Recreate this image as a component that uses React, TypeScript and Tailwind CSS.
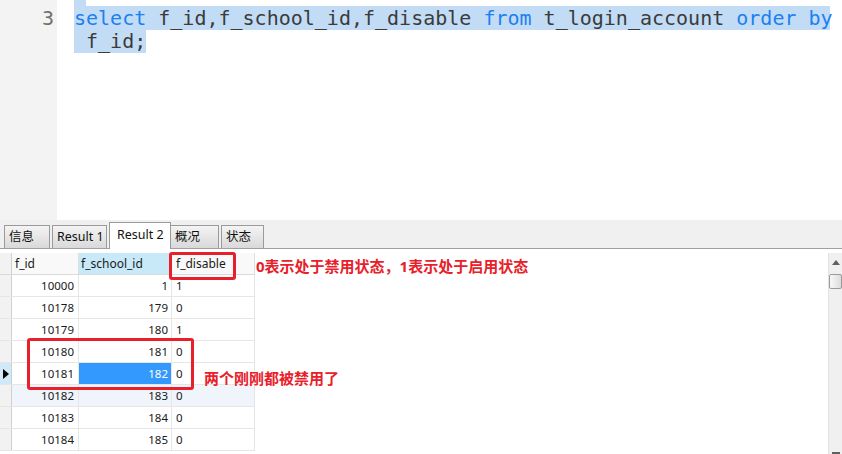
import React from "react";

const mono = { fontFamily: '"DejaVu Sans Mono", "Liberation Mono", monospace' };
const ui = { fontFamily: '"Noto Sans", "Noto Sans CJK SC", sans-serif' };
const cjk = { fontFamily: '"Noto Sans", "Noto Sans CJK SC", sans-serif' };

const rows = [
  { id: "10000", school: "1", dis: "1" },
  { id: "10178", school: "179", dis: "0" },
  { id: "10179", school: "180", dis: "1" },
  { id: "10180", school: "181", dis: "0" },
  { id: "10181", school: "182", dis: "0", current: true },
  { id: "10182", school: "183", dis: "0", hover: true },
  { id: "10183", school: "184", dis: "0" },
  { id: "10184", school: "185", dis: "0" },
];

function Tab({ label, active, w }: { label: string; active?: boolean; w: string }) {
  if (active) {
    return (
      <div
        className={`${w} h-[27px] -mb-px mr-[-1px] bg-white border border-b-0 border-[#9a9a9a] pl-[7px] pt-[3px] text-[12.5px] text-[#111] relative z-10`}
      >
        {label}
      </div>
    );
  }
  return (
    <div
      className={`${w} h-[23px] mr-[2px] border border-b-0 border-[#9a9a9a] bg-gradient-to-b from-[#f4f4f4] to-[#d9d9d9] pl-[4px] pt-[2px] text-[12.5px] text-[#111]`}
    >
      {label}
    </div>
  );
}

export default function App() {
  return (
    <div className="relative w-[842px] h-[454px] overflow-hidden bg-white" style={ui}>
      {/* editor */}
      <div className="flex h-[220px]">
        <div className="w-[57px] bg-[#f3f3f3] text-right pr-[3px] text-[20px] leading-[24px] text-[#707070]" style={mono}>
          <div className="-mt-[20px] h-[26px]">2</div>
          <div>3</div>
        </div>
        <div className="flex-1 pl-[17px] text-[20px] leading-[24px] text-[#3b3b3b] whitespace-pre" style={mono}>
          <div className="-mt-[18px] h-[24px]">
            <span className="bg-[#c2dcf6]"> </span>
          </div>
          <div>
            <span className="bg-[#c2dcf6] inline-block w-[756px]">
              <span className="text-[#1c7ff2]">select</span> f_id,f_school_id,f_disable{" "}
              <span className="text-[#1c7ff2]">from</span> t_login_account{" "}
              <span className="text-[#1c7ff2]">order</span> <span className="text-[#1c7ff2]">by</span>
            </span>
          </div>
          <div className="h-[23px] leading-[23px]">
            <span className="bg-[#c2dcf6] inline-block">{" f_id;"}</span>
          </div>
        </div>
      </div>

      {/* tabs */}
      <div className="h-[29px] bg-[#f0f0f0] border-b border-[#a0a0a0] flex items-end pl-[4px]" style={cjk}>
        <Tab label="信息" w="w-[46px]" />
        <Tab label="Result 1" w="w-[55px]" />
        <Tab label="Result 2" active w="w-[62px]" />
        <Tab label="概况" w="w-[49px]" />
        <Tab label="状态" w="w-[43px]" />
      </div>

      {/* grid */}
      <div className="flex pt-[4px] h-[205px]">
        <div className="w-[255px] text-[11.5px] text-[#1a1a1a]">
          <div className="flex h-[22px] border-b border-[#dadada] text-[12px]">
            <div className="w-[12px] bg-[#f2f2f2] border-r border-[#cfcfcf]" />
            <div className="w-[67px] bg-[#f9f9f9] border-r border-[#dedede] pl-[3px] leading-[21px]">f_id</div>
            <div className="w-[93px] bg-[#c8e9f8] border-r border-[#dedede] pl-[2px] leading-[21px]">f_school_id</div>
            <div className="w-[83px] bg-[#f9f9f9] border-r border-[#dedede] pl-[4px] leading-[21px]">f_disable</div>
          </div>
          {rows.map((r) => (
            <div
              key={r.id}
              className={`flex h-[22px] border-b border-[#e6e6e6] ${r.hover ? "bg-[#eff5fb]" : "bg-white"}`}
            >
              <div
                className={`w-[12px] border-r border-[#cfcfcf] flex items-center justify-center ${
                  r.current ? "bg-[#cfe9f8]" : "bg-[#f2f2f2]"
                }`}
              >
                {r.current && (
                  <svg width="6" height="10" viewBox="0 0 6 10">
                    <path d="M0 0 L6 5 L0 10 Z" fill="#000" />
                  </svg>
                )}
              </div>
              <div className="w-[67px] border-r border-[#e6e6e6] text-right pr-[4px] leading-[21px]">{r.id}</div>
              <div
                className={`w-[93px] border-r border-[#e6e6e6] text-right pr-[3px] leading-[21px] ${
                  r.current ? "bg-[#3399ff] text-white" : ""
                }`}
              >
                {r.school}
              </div>
              <div className="w-[83px] border-r border-[#e6e6e6] pl-[4px] leading-[21px]">{r.dis}</div>
            </div>
          ))}
        </div>
        <div className="flex-1" />
        <div className="w-[14px] bg-[#f0f0f0] border-l border-[#e2e2e2] flex flex-col items-center">
          <svg width="8" height="5" viewBox="0 0 8 5" className="mt-[7px]">
            <path d="M0 5 L4 0 L8 5 Z" fill="#606060" />
          </svg>
          <div className="mt-[9px] w-[13px] h-[15px] bg-gradient-to-r from-[#f8f8f8] to-[#dcdcdc] border border-[#9a9a9a] rounded-[2px]" />
          <div className="flex-1" />
          <div className="w-[8px] h-[2px] bg-[#606060]" />
        </div>
      </div>

      {/* annotations */}
      <div className="absolute left-[169px] top-[252px] w-[67px] h-[28px] border-[3px] border-[#e8202a] rounded-[3px]" />
      <div className="absolute left-[27px] top-[338px] w-[167px] h-[52px] border-[3px] border-[#e8202a] rounded-[3px]" />
      <div
        className="absolute left-[256px] top-[256px] text-[15px] font-bold text-[#e8202a] leading-[20px] whitespace-nowrap"
        style={cjk}
      >
        0表示处于禁用状态，1表示处于启用状态
      </div>
      <div
        className="absolute left-[204px] top-[368px] text-[15px] font-bold text-[#e8202a] leading-[20px] whitespace-nowrap"
        style={cjk}
      >
        两个刚刚都被禁用了
      </div>
    </div>
  );
}
